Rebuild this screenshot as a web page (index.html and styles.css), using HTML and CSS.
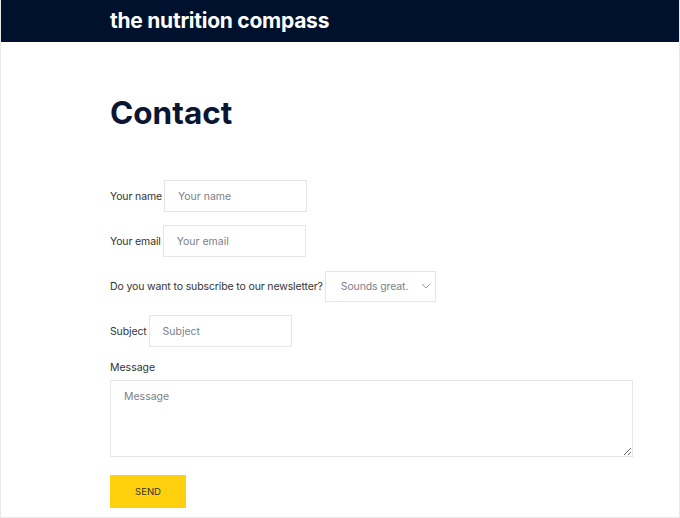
FILE: index.html
```html
<!DOCTYPE html>
<html lang="en">
<head>
  <meta charset="UTF-8">
  <meta name="viewport" content="width=device-width, initial-scale=1.0">
  <title>Contact - the nutrition compass</title>
  <link rel="stylesheet" href="styles.css">
</head>
<body>
  <div class="page">
    <header class="site-header">
      <div class="inner">
        <span class="logo">the nutrition compass</span>
      </div>
    </header>

    <main class="inner">
      <h1>Contact</h1>

      <form class="contact-form">
        <div class="row">
          <label for="name">Your name</label>
          <input type="text" id="name" placeholder="Your name">
        </div>
        <div class="row">
          <label for="email">Your email</label>
          <input type="text" id="email" placeholder="Your email">
        </div>
        <div class="row">
          <label for="news">Do you want to subscribe to our newsletter?</label>
          <div class="select">
            <span>Sounds great.</span>
            <svg width="10" height="6" viewBox="0 0 10 6"><path d="M1 1l4 4 4-4" fill="none" stroke="#999" stroke-width="1"/></svg>
          </div>
        </div>
        <div class="row">
          <label for="subject">Subject</label>
          <input type="text" id="subject" placeholder="Subject">
        </div>
        <div class="row-block">
          <label for="message">Message</label>
          <textarea id="message" placeholder="Message"></textarea>
        </div>
        <button type="button">SEND</button>
      </form>
    </main>
  </div>
</body>
</html>
```

FILE: styles.css
```css
* {
  box-sizing: border-box;
}

body {
  margin: 0;
  background: #fff;
  font-family: Inter, "Liberation Sans", sans-serif;
  color: #333;
}

.page {
  height: 518px;
  border: 1px solid #e8e8e8;
  border-top: none;
  overflow: hidden;
}

.inner {
  width: 523px;
  margin-left: 109px;
}

.site-header {
  background-color: #00112e;
  height: 42px;
}

.site-header .inner {
  padding-top: 8px;
}

.logo {
  color: #fff;
  font-weight: 700;
  font-size: 21px;
  letter-spacing: -0.25px;
}

h1 {
  margin: 52px 0 0;
  font-size: 31.5px;
  font-weight: 700;
  color: #0b1633;
  line-height: 38px;
}

.contact-form {
  margin-top: 48px;
}

.row {
  display: flex;
  align-items: center;
  height: 32px;
  margin-bottom: 13px;
  font-size: 10.5px;
  letter-spacing: -0.13px;
}

.row label {
  margin-right: 2px;
}

input,
.select,
textarea {
  border: 1px solid #e6e6e6;
  background: #fff;
  font-family: inherit;
  font-size: 10.5px;
  color: #333;
}

input {
  width: 143px;
  height: 32px;
  padding: 0 13px;
}

input::placeholder,
textarea::placeholder {
  color: #7a7f88;
}

.select {
  width: 111px;
  height: 31px;
  display: flex;
  align-items: center;
  justify-content: space-between;
  padding: 0 4px 0 15px;
  color: #7a7f88;
}

.row-block {
  padding-top: 1px;
  font-size: 10.5px;
}

.row-block label {
  display: block;
  margin-bottom: 6px;
}

textarea {
  display: block;
  width: 523px;
  height: 77px;
  padding: 9px 13px;
  resize: vertical;
}

button {
  margin-top: 18px;
  width: 76px;
  height: 33px;
  border: none;
  background-color: #ffd00d;
  color: #333;
  font-family: inherit;
  font-size: 9.5px;
}
```
